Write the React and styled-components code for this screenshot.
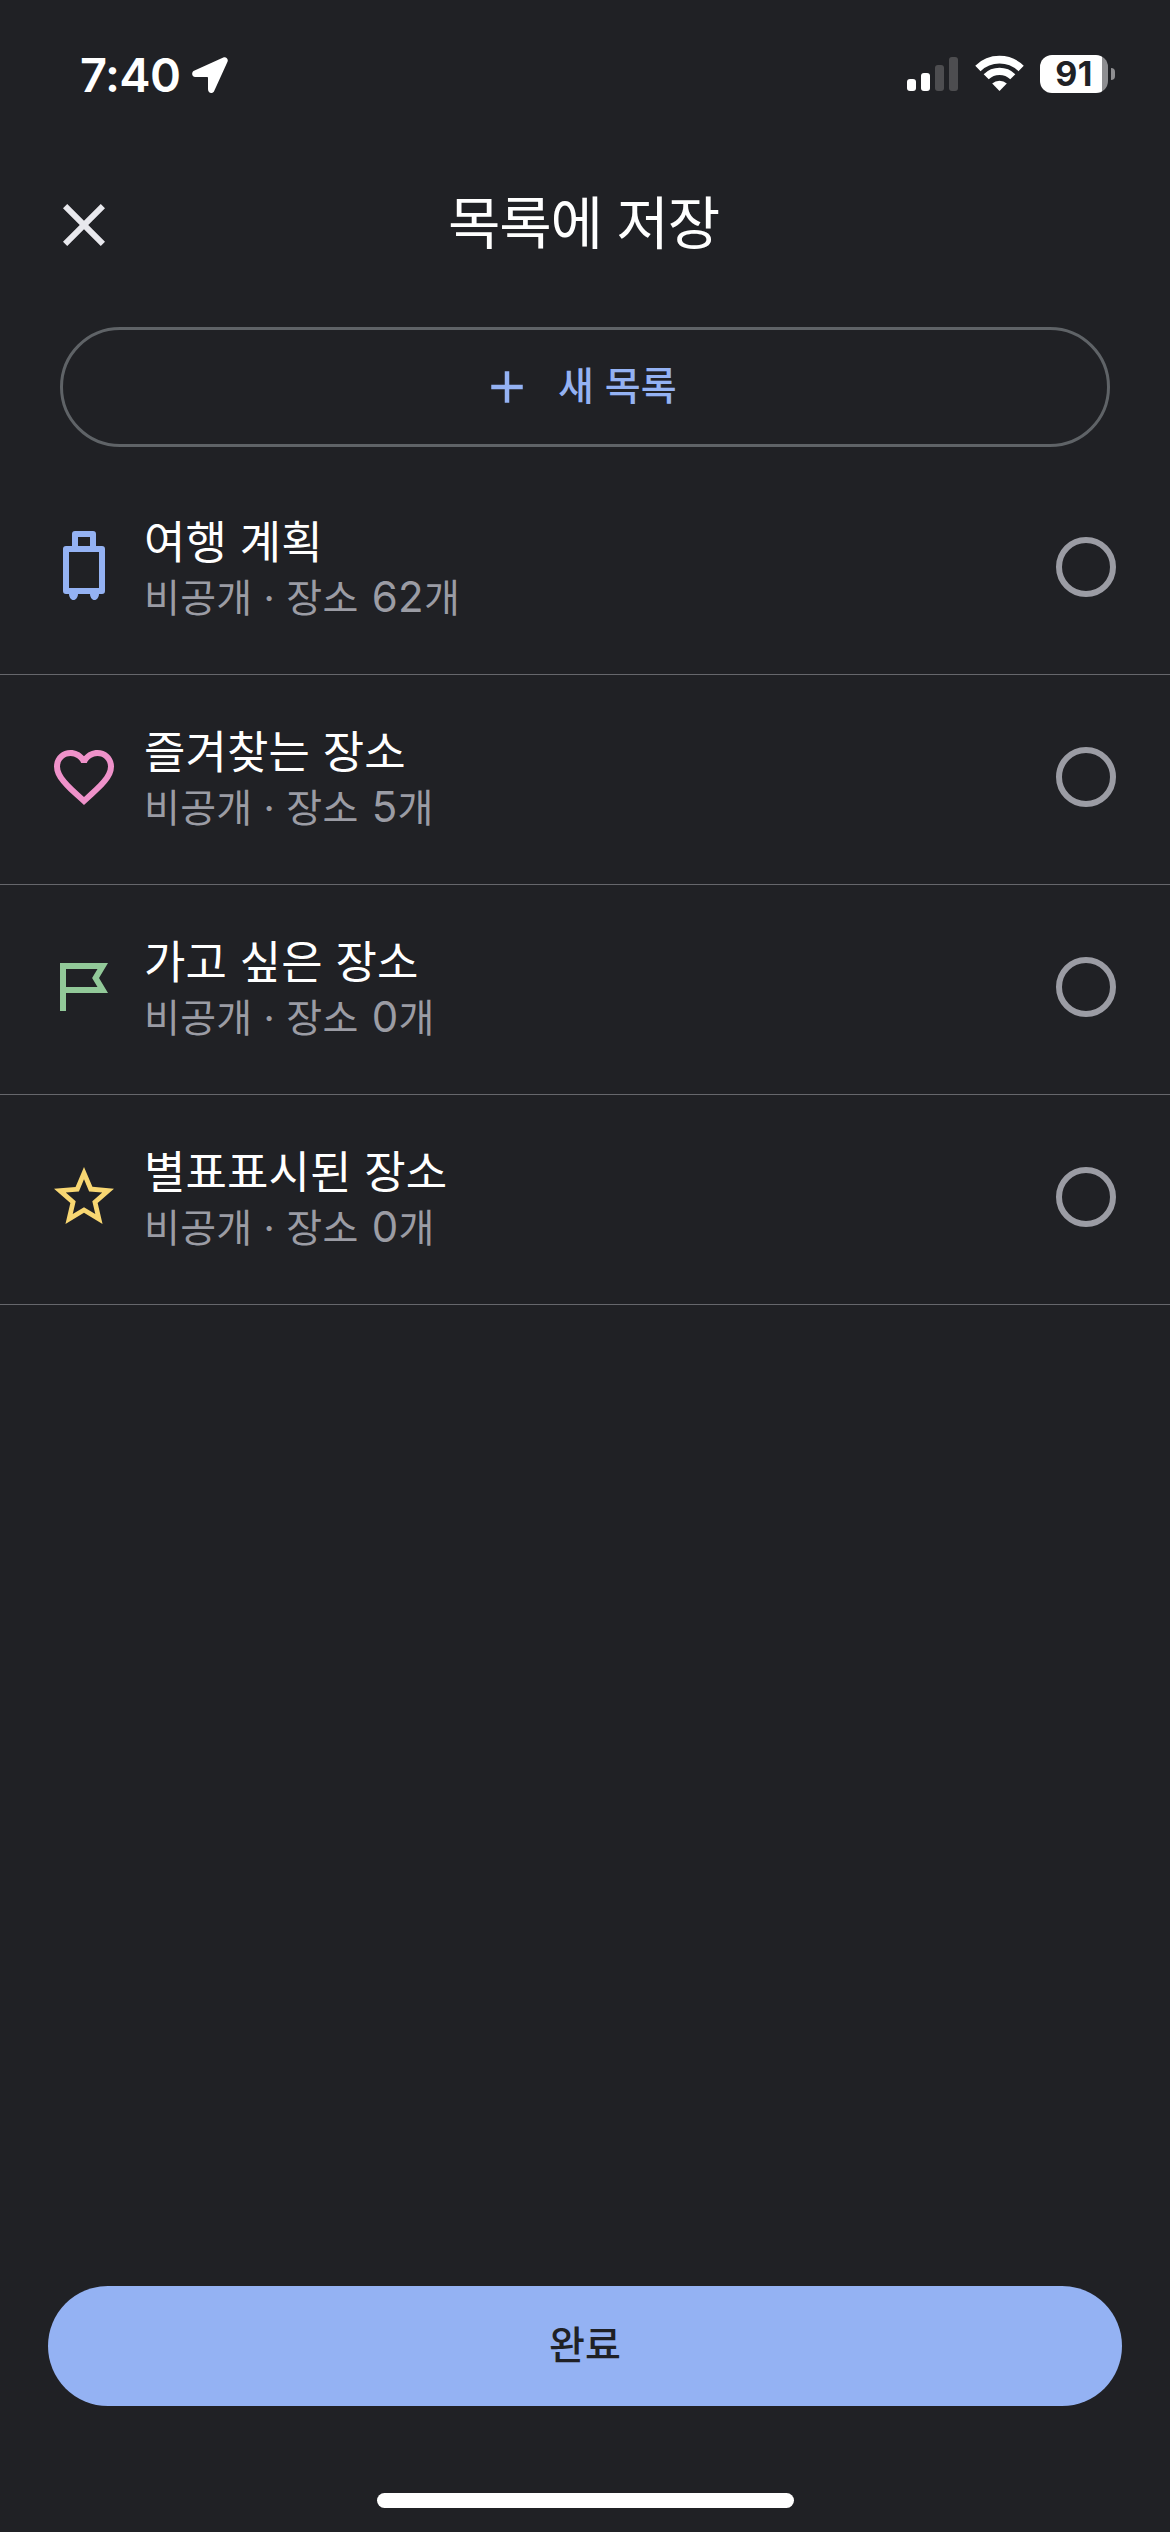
import React from "react";
import styled, { createGlobalStyle } from "styled-components";

const GlobalStyle = createGlobalStyle`
  *, *::before, *::after { box-sizing: border-box; }
  html, body { margin: 0; padding: 0; background: #202125; }
  body { font-family: Inter, "Noto Sans CJK KR", sans-serif; }
  h1, h2, p, ul { margin: 0; padding: 0; font-weight: 400; }
  button { font: inherit; background: none; border: 0; padding: 0; margin: 0; }
  svg { display: block; flex: none; }
`;

const Screen = styled.main`
  width: 1170px;
  height: 2532px;
  display: flex;
  flex-direction: column;
  background: #202125;
  color: #fff;
  overflow: hidden;
`;

const StatusBar = styled.header`
  height: 147px;
  padding: 0 55px 0 80px;
  display: flex;
  justify-content: space-between;
  align-items: flex-start;
`;

const TimeGroup = styled.div`
  display: flex;
  align-items: flex-start;
  padding-top: 57px;
  gap: 13px;
`;

const Clock = styled.span`
  width: 99px;
  height: 36px;
  line-height: 35px;
  font-size: 47px;
  font-weight: 600;
  white-space: nowrap;
  letter-spacing: -0.6px;
`;

const StatusIcons = styled.div`
  display: flex;
  align-items: flex-start;
  padding-top: 55px;
`;

const Signal = styled.div`
  height: 36px;
  display: flex;
  align-items: flex-end;
  gap: 5px;
  margin-right: 17px;
`;

const Bar = styled.span`
  width: 9px;
  height: ${(p) => p.$height}px;
  border-radius: 3px;
  background: ${(p) => (p.$on ? "#fff" : "#4d4d50")};
`;

const Battery = styled.div`
  display: flex;
  align-items: center;
  gap: 3px;
  margin-left: 16px;
`;

const BatteryBody = styled.div`
  width: 68px;
  height: 38px;
  border-radius: 12px;
  background: linear-gradient(to right, #fff 62px, #8e8e91 62px);
  color: #202125;
  font-size: 34px;
  line-height: 38px;
  font-weight: 700;
  text-align: center;
  letter-spacing: 0.5px;
`;

const BatteryTip = styled.span`
  width: 4px;
  height: 12px;
  border-radius: 0 4px 4px 0;
  background: #8e8e91;
`;

const TitleBar = styled.div`
  height: 180px;
  padding: 42px 48px 0;
  display: grid;
  grid-template-columns: 72px 1fr 72px;
  align-items: start;
`;

const IconButton = styled.button`
  width: 72px;
  height: 72px;
  color: #e8e8ed;
`;

const Title = styled.h1`
  height: 72px;
  line-height: 70px;
  font-size: 57px;
  text-align: center;
  letter-spacing: -1.2px;
  padding-right: 3px;
  white-space: nowrap;
`;

const NewListButton = styled.button`
  height: 120px;
  margin: 0 60px;
  flex: none;
  border: 3px solid #5f6367;
  border-radius: 60px;
  display: flex;
  align-items: center;
  justify-content: center;
  gap: 24px;
  padding-right: 13px;
  color: #94b2f3;
  font-size: 39px;
  font-weight: 500;
`;

const ButtonLabel = styled.span`
  line-height: 58px;
  padding-bottom: 2px;
  letter-spacing: 0.2px;
`;

const ListOptions = styled.ul`
  list-style: none;
  margin-top: 18px;
  flex: 1;
`;

const Row = styled.li`
  height: 210px;
  border-bottom: 1px solid #66676c;
  padding: 0 54px 0 48px;
  display: flex;
  align-items: flex-start;
`;

const RowIcon = styled.span`
  margin-top: 66px;
  color: ${(p) => p.$color};
`;

const RowText = styled.div`
  flex: 1;
  padding: 50px 0 0 24px;
  white-space: nowrap;
`;

const RowTitle = styled.h2`
  font-size: 45px;
  line-height: 56px;
  letter-spacing: 0.1px;
`;

const RowMeta = styled.p`
  font-size: 39px;
  line-height: 52px;
  letter-spacing: 0.25px;
  color: #9b9ca4;
`;

const Count = styled.span`
  font-size: 42px;
  margin-left: 2px;
`;

const Radio = styled.span`
  width: 60px;
  height: 60px;
  margin-top: 72px;
  border: 6px solid #9b9ca4;
  border-radius: 50%;
`;

const DoneButton = styled.button`
  height: 120px;
  margin: 0 48px;
  flex: none;
  border-radius: 60px;
  background: #94b2f3;
  color: #202125;
  font-size: 39px;
  font-weight: 500;
`;

const HomeArea = styled.footer`
  height: 126px;
  flex: none;
  display: flex;
  justify-content: center;
  padding-top: 87px;
`;

const HomeIndicator = styled.span`
  width: 417px;
  height: 15px;
  border-radius: 8px;
  background: #fff;
`;

const Glyph = ({ size = 72, d }) => (
  <svg width={size} height={size} viewBox="0 0 24 24" fill="currentColor" fillRule="evenodd" aria-hidden="true">
    <path d={d} />
  </svg>
);

const paths = {
  close: "M19 6.41L17.59 5 12 10.59 6.41 5 5 6.41 10.59 12 5 17.59 6.41 19 12 13.41 17.59 19 19 17.59 13.41 12z",
  add: "M19 13h-6v6h-2v-6H5v-2h6V5h2v6h6z",
  luggage:
    "M9 0h6a1 1 0 0 1 1 1v4h2a1 1 0 0 1 1 1v14a1 1 0 0 1-1 1h-1c0 1.100-.7 2-1.500 2s-1.500-.9-1.500-2h-4c0 1.100-.7 2-1.500 2s-1.500-.9-1.500-2H6a1 1 0 0 1-1-1V6a1 1 0 0 1 1-1h2V1a1 1 0 0 1 1-1zM10 2v3h4V2zM7 7v12h10V7z",
  heart:
    "M16.5 3c-1.740 0-3.410.81-4.500 2.090C10.910 3.810 9.240 3 7.500 3 4.420 3 2 5.420 2 8.500c0 3.780 3.400 6.860 8.550 11.540L12 21.350l1.450-1.320C18.600 15.360 22 12.280 22 8.500 22 5.420 19.580 3 16.500 3zm-4.400 15.550l-.1.1-.1-.1C7.140 14.240 4 11.390 4 8.500 4 6.500 5.500 5 7.500 5c1.540 0 3.040.99 3.570 2.360h1.870C13.460 5.990 14.960 5 16.500 5c2 0 3.500 1.500 3.500 3.500 0 2.890-3.140 5.740-7.900 10.050z",
  flag: "M4 4h16l-3 5 3 5H6v6H4zM6 6v6h10.500l-1.800-3 1.800-3z",
  star: "M22 9.240l-7.190-.62L12 2 9.190 8.630 2 9.240l5.460 4.730L5.820 21 12 17.270 18.180 21l-1.630-7.030L22 9.240zM12 15.400l-3.760 2.270 1-4.280-3.320-2.880 4.380-.38L12 6.100l1.710 4.040 4.380.38-3.320 2.880 1 4.280L12 15.400z",
};

const LocationArrow = () => (
  <svg width="36" height="36" viewBox="0 0 36 36" fill="#fff" aria-hidden="true">
    <path d="M31.300.5 2 13.800C-.9 15.200-.3 20 3.300 20H15.200c.5 0 .8.300.8.800V32.300c0 4.200 4.700 4.800 6.200 1.600L35.500 4.700C36.700 2 34-.7 31.300.5z" />
  </svg>
);

const Wifi = () => (
  <svg width="49" height="36" viewBox="0 0 49 36" fill="none" aria-hidden="true">
    <path d="M2.900 13.400a31 31 0 0 1 43.200 0" stroke="#fff" strokeWidth="7.600" />
    <path d="M11.200 21.800a19 19 0 0 1 26.600 0" stroke="#fff" strokeWidth="7.200" />
    <path d="M24.500 36 17.200 28.600a10.500 10.500 0 0 1 14.600 0z" fill="#fff" />
  </svg>
);

const signalBars = [
  { height: 12, on: true },
  { height: 18, on: true },
  { height: 26, on: false },
  { height: 34, on: false },
];

const lists = [
  { title: "여행 계획", count: 62, icon: "luggage", color: "#94b2f3" },
  { title: "즐겨찾는 장소", count: 5, icon: "heart", color: "#ef92ca" },
  { title: "가고 싶은 장소", count: 0, icon: "flag", color: "#92c999" },
  { title: "별표표시된 장소", count: 0, icon: "star", color: "#f8d772" },
];

export default function App() {
  return (
    <>
      <GlobalStyle />
      <Screen>
        <StatusBar>
          <TimeGroup>
            <Clock>7:40</Clock>
            <LocationArrow />
          </TimeGroup>
          <StatusIcons>
            <Signal>
              {signalBars.map((b) => (
                <Bar key={b.height} $height={b.height} $on={b.on} />
              ))}
            </Signal>
            <Wifi />
            <Battery>
              <BatteryBody>91</BatteryBody>
              <BatteryTip />
            </Battery>
          </StatusIcons>
        </StatusBar>
        <TitleBar>
          <IconButton aria-label="닫기">
            <Glyph d={paths.close} />
          </IconButton>
          <Title>목록에 저장</Title>
        </TitleBar>
        <NewListButton>
          <Glyph size={54} d={paths.add} />
          <ButtonLabel>새 목록</ButtonLabel>
        </NewListButton>
        <ListOptions>
          {lists.map((item) => (
            <Row key={item.title}>
              <RowIcon $color={item.color}>
                <Glyph d={paths[item.icon]} />
              </RowIcon>
              <RowText>
                <RowTitle>{item.title}</RowTitle>
                <RowMeta>
                  비공개 · 장소 <Count>{item.count}</Count>개
                </RowMeta>
              </RowText>
              <Radio />
            </Row>
          ))}
        </ListOptions>
        <DoneButton>
          <ButtonLabel as="div">완료</ButtonLabel>
        </DoneButton>
        <HomeArea>
          <HomeIndicator />
        </HomeArea>
      </Screen>
    </>
  );
}
